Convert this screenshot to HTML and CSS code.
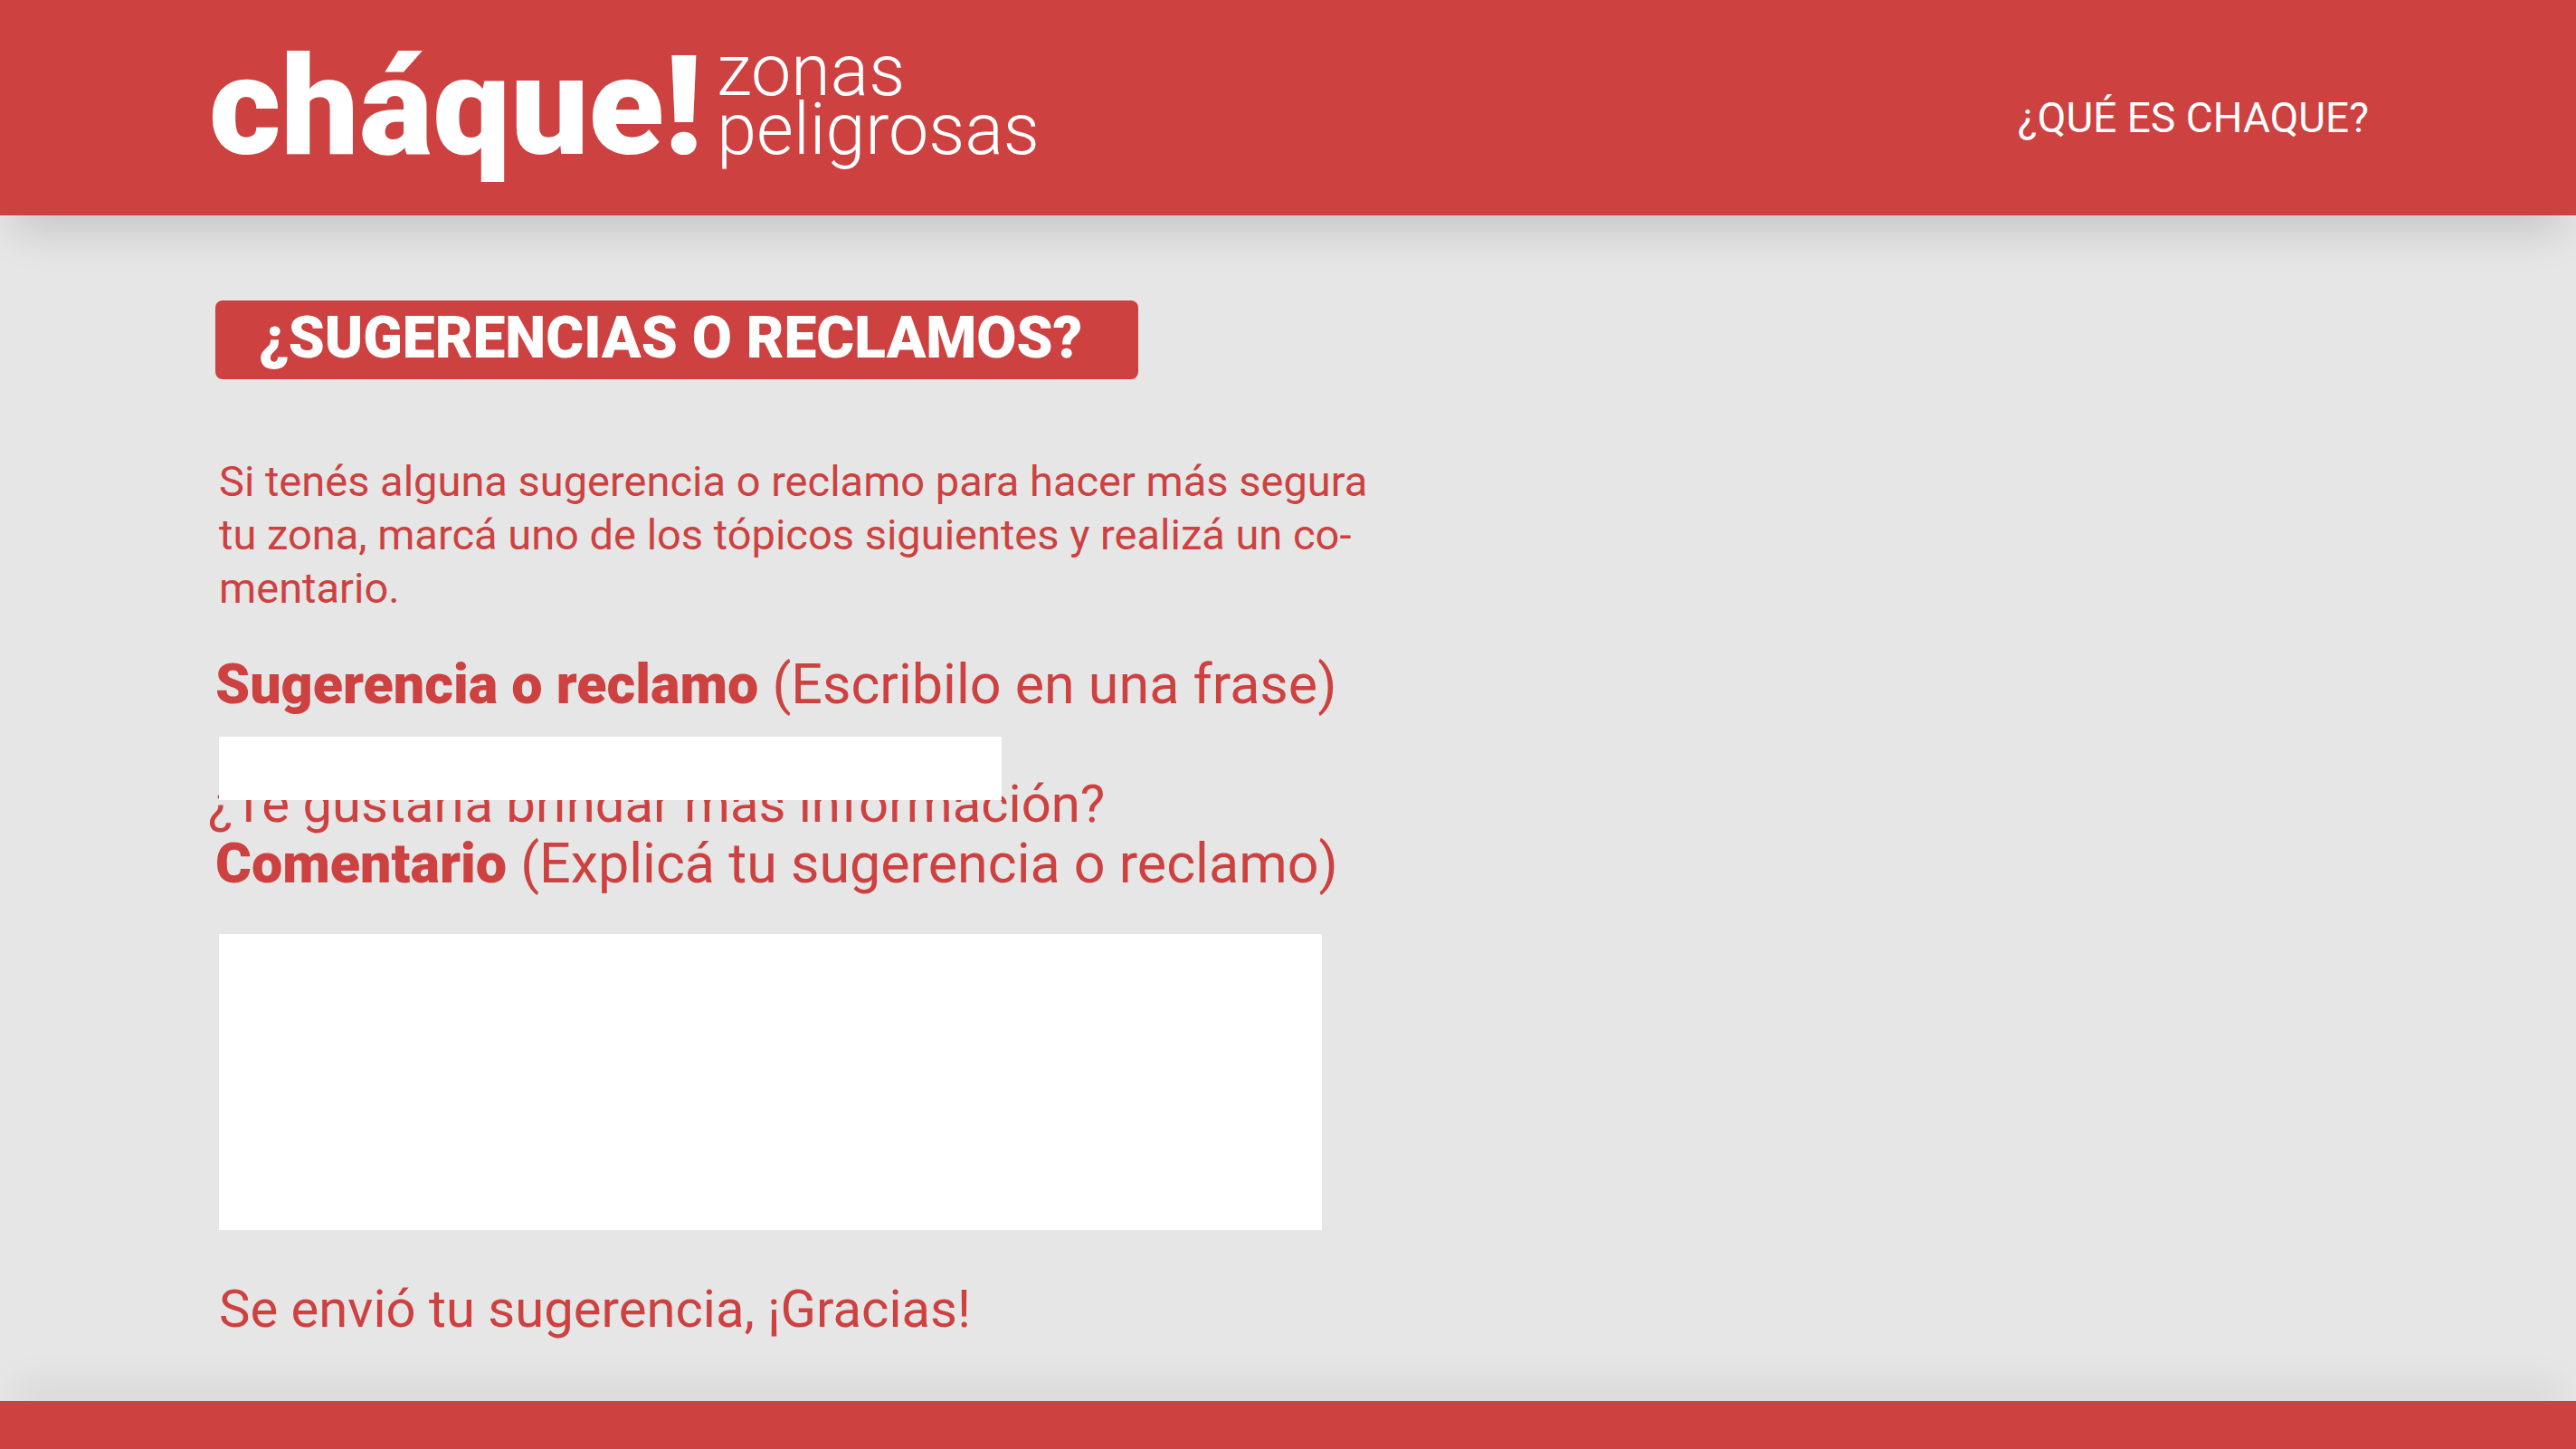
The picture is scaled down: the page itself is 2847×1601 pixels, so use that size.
FILE: index.html
```html
<!DOCTYPE html>
<html lang="es">
<head>
  <meta charset="utf-8">
  <meta name="viewport" content="width=device-width, initial-scale=1">
  <title>Cháque! Zonas peligrosas</title>
  <link rel="stylesheet" href="styles.css">
</head>
<body>
  <header class="site-header">
    <a class="brand" href="#">
      <span class="brand-name">cháque!</span>
      <span class="brand-tagline">zonas<br>peligrosas</span>
    </a>
    <nav class="site-nav">
      <a class="nav-link" href="#">¿QUÉ ES CHAQUE?</a>
    </nav>
  </header>

  <main class="content">
    <h1 class="title">¿SUGERENCIAS O RECLAMOS?</h1>
    <p class="intro">Si tenés alguna sugerencia o reclamo para hacer más segura tu zona, marcá uno de los tópicos siguientes y realizá un co&shy;mentario.</p>
    <form class="form">
      <label class="label" for="sugerencia"><strong>Sugerencia o reclamo</strong> (Escribilo en una frase)</label>
      <input class="field field-line" id="sugerencia" type="text">
      <p class="question">¿Te gustaría brindar más información?</p>
      <label class="label" for="comentario"><strong>Comentario</strong> (Explicá tu sugerencia o reclamo)</label>
      <textarea class="field field-area" id="comentario"></textarea>
      <p class="thanks" role="status">Se envió tu sugerencia, ¡Gracias!</p>
    </form>
  </main>

  <footer class="site-footer"></footer>
</body>
</html>
```
FILE: styles.css
```css
:root {
  --red: #cd4140;
  --grey: #e6e6e6;
  --gutter: 238px;
}

* {
  box-sizing: border-box;
}

body {
  margin: 0;
  min-height: 100vh;
  display: flex;
  flex-direction: column;
  background: var(--grey);
  color: var(--red);
  font-family: Roboto, "Liberation Sans", sans-serif;
}

p,
h1 {
  margin: 0;
}

/* Header */
.site-header {
  display: flex;
  justify-content: space-between;
  align-items: center;
  padding: 41px 229px 44px 231px;
  background: var(--red);
  color: #fff;
  box-shadow: 0 34px 44px -16px rgba(0, 0, 0, 0.14);
}

.brand {
  display: flex;
  align-items: last baseline;
  gap: 16px;
  color: inherit;
  text-decoration: none;
}

.brand-name {
  font-size: 153px;
  font-weight: 900;
  line-height: 153px;
}

.brand-tagline {
  font-size: 79px;
  font-weight: 300;
  line-height: 65px;
}

.site-nav {
  padding-top: 24px;
}

.nav-link {
  color: inherit;
  font-size: 46px;
  line-height: 56px;
  text-decoration: none;
}

/* Content */
.content {
  flex: 1;
  padding: 94px var(--gutter) 68px;
}

.title {
  width: fit-content;
  padding: 0 62px 4px 48px;
  border-radius: 8px;
  background: var(--red);
  color: #fff;
  font-size: 64px;
  font-weight: 900;
  line-height: 83px;
}

.intro {
  max-width: 1304px;
  margin: 83px 0 44px;
  padding-left: 4px;
  font-size: 47px;
  line-height: 59px;
}

/* Form */
.form {
  display: flex;
  flex-direction: column;
  align-items: flex-start;
}

.label {
  font-size: 61px;
  line-height: 66px;
}

.label strong {
  font-weight: 900;
}

.field {
  position: relative;
  z-index: 1;
  max-width: 100%;
  margin: 0 0 0 4px;
  padding: 8px 16px;
  border: 0;
  border-radius: 0;
  background: #fff;
  color: var(--red);
  font: inherit;
  font-size: 47px;
  resize: none;
}

.field-line {
  width: 865px;
  height: 70px;
  margin-top: 25px;
}

.field-area {
  width: 1219px;
  height: 327px;
  margin-top: 45px;
}

.question,
.thanks {
  font-size: 58px;
  line-height: 66px;
}

/* The question tucks under the lower edge of the text box */
.question {
  margin: -29px 0 0 -8px;
}

.thanks {
  margin: 54px 0 0 4px;
}

/* Footer */
.site-footer {
  height: 53px;
  background: var(--red);
  box-shadow: 0 -30px 44px -16px rgba(0, 0, 0, 0.11);
}
```
